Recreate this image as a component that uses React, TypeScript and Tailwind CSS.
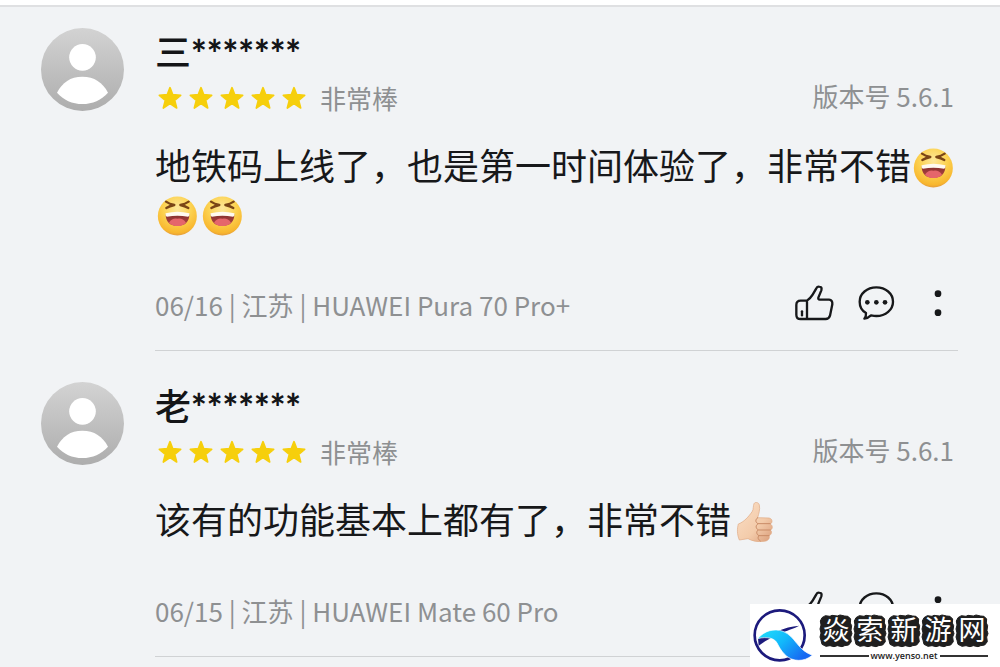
type Review = {
  name: string;
  rating: string;
  version: string;
  text: string;
  emoji: Array<'laugh' | 'thumb'>;
  date: string;
  region: string;
  device: string;
};

const reviews: Review[] = [
  {
    name: '三',
    rating: '非常棒',
    version: '5.6.1',
    text: '地铁码上线了，也是第一时间体验了，非常不错',
    emoji: ['laugh', 'laugh', 'laugh'],
    date: '06/16',
    region: '江苏',
    device: 'HUAWEI Pura 70 Pro+',
  },
  {
    name: '老',
    rating: '非常棒',
    version: '5.6.1',
    text: '该有的功能基本上都有了，非常不错',
    emoji: ['thumb'],
    date: '06/15',
    region: '江苏',
    device: 'HUAWEI Mate 60 Pro',
  },
];

function Avatar() {
  return (
    <svg className="size-[83px] shrink-0" viewBox="0 0 249 249" aria-hidden="true">
      <defs>
        <linearGradient id="avatar" x1="0" y1="0" x2="0" y2="1">
          <stop offset="0" stopColor="#d3d3d3" />
          <stop offset="1" stopColor="#adadad" />
        </linearGradient>
      </defs>
      <circle cx="124.500" cy="124.500" r="124.500" fill="url(#avatar)" />
      <circle cx="124.500" cy="88" r="40" fill="#fff" />
      <path d="M48 194 C64 163 88 146 124 146 S185 163 201 194 C182 216 154 228 124 228 S67 216 48 194Z" fill="#fff" />
    </svg>
  );
}

function Star() {
  return (
    <svg className="size-6" viewBox="0 0 72 72" aria-hidden="true">
      <path
        d="M36 5 L44 26 L68 28 L50 43 L56 66 L36 53 L16 66 L22 43 L4 28 L28 26Z"
        fill="#f6cf0c"
        stroke="#f6cf0c"
        strokeWidth="5"
        strokeLinejoin="round"
      />
    </svg>
  );
}

function Laugh() {
  return (
    <svg className="inline-block h-10 w-[45px] align-[-8px]" viewBox="0 0 135 120" role="img" aria-label="大笑">
      <defs>
        <radialGradient id="face" cx="0.5" cy="0.3" r="0.72">
          <stop offset="0" stopColor="#fde79a" />
          <stop offset="0.5" stopColor="#fcd250" />
          <stop offset="0.88" stopColor="#f8b62e" />
          <stop offset="1" stopColor="#dd9440" />
        </radialGradient>
        <linearGradient id="mouth" x1="0" y1="0" x2="0" y2="1">
          <stop offset="0" stopColor="#7c2b2a" />
          <stop offset="1" stopColor="#b94846" />
        </linearGradient>
      </defs>
      <circle cx="67" cy="60" r="58.500" fill="url(#face)" />
      <g fill="none" stroke="#7a4516" strokeWidth="7" strokeLinecap="round" strokeLinejoin="round">
        <path d="M33 17 Q43 24 58 27 Q44 30 34 36" />
        <path d="M101 17 Q91 24 76 27 Q90 30 100 36" />
      </g>
      <path d="M32 54 Q67 46 103 54 Q103 89 67 90 Q32 89 32 54Z" fill="url(#mouth)" />
      <path d="M42 80 Q52 65 67 68 Q83 65 93 80 Q83 90 67 90 Q52 90 42 80Z" fill="#e5666b" />
      <path d="M32 52 Q67 43 103 52 Q105 61 99 62 Q67 56 36 62 Q30 61 32 52Z" fill="#fffaf0" />
    </svg>
  );
}

function ThumbEmoji() {
  return (
    <svg className="inline-block h-10 w-[45px] align-[-8px]" viewBox="-5 0 135 120" role="img" aria-label="点赞">
      <defs>
        <linearGradient id="skin" x1="0" y1="0" x2="1" y2="1">
          <stop offset="0" stopColor="#fbdfc6" />
          <stop offset="0.6" stopColor="#f3cbaa" />
          <stop offset="1" stopColor="#d99c79" />
        </linearGradient>
      </defs>
      <path
        d="M17 66 C34 60 48 44 59 28 C63 21 61 12 64 5 C67 -1 78 0 80 9 C83 23 78 36 75 47 L109 48 C121 50 120 64 112 66 C122 70 120 82 113 84 C120 89 116 99 109 101 C113 109 106 117 94 118 C75 121 59 117 46 110 L20 114 C13 98 13 80 17 66Z"
        fill="url(#skin)"
        stroke="#dfa983"
        strokeWidth="2"
      />
      <path d="M75 47 C67 53 68 61 76 65 H112 M75 66 C68 71 69 79 77 84 H113 M76 84 C70 89 71 97 79 101 H109 M79 101 C73 107 77 113 83 117" fill="none" stroke="#c98b66" strokeWidth="3" strokeLinecap="round" />
    </svg>
  );
}

function LikeIcon() {
  return (
    <svg className="size-10" viewBox="0 0 120 120" fill="none" stroke="#17181a" strokeWidth="7" strokeLinecap="round" strokeLinejoin="round" aria-hidden="true">
      <path d="M39 47 H20 Q7 47 7 60 V89 Q7 102 20 102 H95 Q105 102 108 92 L115 58 Q116 45 105 44 H77 Q72 44 73 38 L82 16 Q85 5 76 5 Q70 4 67 10 L56 29 Q50 39 39 47 V102" />
      <path d="M24 79 V91" />
    </svg>
  );
}

function CommentIcon() {
  return (
    <svg className="size-10" viewBox="0 0 120 120" aria-hidden="true">
      <path
        d="M30 84 C18 77 11 64 11 50 C11 26 33 7 61 7 S111 26 111 50 S89 93 61 93 C55 93 50 92 45 91 Q35 100 25 101 Q31 94 30 84Z"
        fill="none"
        stroke="#17181a"
        strokeWidth="7"
        strokeLinejoin="round"
      />
      <g fill="#17181a">
        <circle cx="34" cy="52" r="7" />
        <circle cx="61" cy="52" r="7" />
        <circle cx="87" cy="52" r="7" />
      </g>
    </svg>
  );
}

function MoreIcon() {
  return (
    <svg className="size-10" viewBox="0 0 120 120" fill="#17181a" aria-hidden="true">
      <circle cx="60" cy="26" r="10" />
      <circle cx="60" cy="83" r="10" />
    </svg>
  );
}

function ReviewItem({ review }: { review: Review }) {
  return (
    <article className="flex gap-[31px] pt-[31px] pr-[42px] pl-[41px] first:pt-[21px]">
      <Avatar />
      <div className="min-w-0 flex-1 border-b border-[#d0d2d4] pb-[25px]">
        <h2 className="flex h-11 items-center text-[36px] leading-[44px] font-medium text-[#141517]">
          {review.name}
          <span className="pt-2 font-['Lato','Noto_Sans_CJK_SC',sans-serif] text-[37px] font-black">*******</span>
        </h2>
        <div className="mt-3 flex h-7 items-start justify-between text-[26px] text-[#8e9092]">
          <div className="flex items-center gap-[14px] pl-[3px] leading-7">
            <div className="flex gap-[7px]" role="img" aria-label="5 星">
              {[1, 2, 3, 4, 5].map((n) => (
                <Star key={n} />
              ))}
            </div>
            <span>{review.rating}</span>
          </div>
          <span className="pr-1 leading-6">版本号 {review.version}</span>
        </div>
        <p className="mt-7 text-[36px] leading-[48px] text-[#17181a]">
          {review.text}
          {review.emoji.map((kind, i) => (kind === 'laugh' ? <Laugh key={i} /> : <ThumbEmoji key={i} />))}
        </p>
        <footer className="mt-[49px] flex h-10 items-center justify-between">
          <span className="text-[26px] leading-10 text-[#8e9092]">
            {review.date} | {review.region} | {review.device}
          </span>
          <div className="flex gap-[22px]">
            <button type="button" aria-label="赞">
              <LikeIcon />
            </button>
            <button type="button" aria-label="评论">
              <CommentIcon />
            </button>
            <button type="button" aria-label="更多">
              <MoreIcon />
            </button>
          </div>
        </footer>
      </div>
    </article>
  );
}

function Stamp({ glyph }: { glyph: string }) {
  return (
    <span className="relative flex size-8 items-center justify-center">
      <svg className="absolute inset-0 size-8 overflow-visible" viewBox="0 0 96 96" aria-hidden="true">
        <path
          d="M16 2 L30 4 L36 1 L52 3 L60 0 L74 3 L84 4 L92 12 L91 24 L95 32 L93 46 L96 56 L92 66 L94 80 L86 90 L74 92 L66 95 L52 92 L42 95 L30 92 L18 94 L6 88 L3 76 L0 66 L3 54 L0 42 L3 30 L1 18 L6 8Z"
          fill="#1f1f1f"
          stroke="#1f1f1f"
          strokeWidth="3"
          strokeLinejoin="round"
        />
      </svg>
      <span className="relative pb-1">{glyph}</span>
    </span>
  );
}

function SiteBadge() {
  return (
    <a href="#yenso" className="fixed right-0 bottom-0 flex h-[63px] w-[250px] bg-white pl-[3px]">
      <svg className="h-[63px] w-[62px] shrink-0" viewBox="39 12 186 189" aria-hidden="true">
        <defs>
          <linearGradient id="wave" x1="0" y1="0" x2="1" y2="0.6">
            <stop offset="0" stopColor="#22e0fa" />
            <stop offset="0.5" stopColor="#12b9fb" />
            <stop offset="1" stopColor="#1769f2" />
          </linearGradient>
        </defs>
        <circle cx="119" cy="106" r="75" fill="none" stroke="#1c1a7c" strokeWidth="8" />
        <path d="M54 115 C95 103 130 80 178 77 C152 91 110 98 56 137Z" fill="#1c1a7c" />
        <path
          d="M53 116 C73 92 103 84 129 94 C168 110 170 149 217 166 C203 177 190 181 176 181 C146 181 128 160 116 138 C110 125 104 118 92 115 C80 112 68 112 53 116Z"
          fill="url(#wave)"
          stroke="#fff"
          strokeWidth="2"
        />
      </svg>
      <span className="ml-[5px] flex flex-col pt-[11px]">
        <span className="flex gap-[2px] text-[27px] leading-7 text-white">
          {['焱', '索', '新', '游', '网'].map((c) => (
            <Stamp key={c} glyph={c} />
          ))}
        </span>
        <span className="mt-1 flex items-center gap-[2px] font-['Open_Sans',sans-serif] text-[9px] leading-[10px] font-semibold text-[#222]">
          <span className="h-[2px] flex-1 bg-[#333]" />
          www.yenso.net
          <span className="h-[2px] flex-1 bg-[#333]" />
        </span>
      </span>
    </a>
  );
}

export default function App() {
  return (
    <div className="min-h-screen bg-[#f1f3f5] font-['Noto_Sans_CJK_SC',sans-serif]">
      <div className="h-[7px] border-b-2 border-[#dfe0e2] bg-white" />
      <main>
        {reviews.map((review) => (
          <ReviewItem key={review.date} review={review} />
        ))}
      </main>
      <SiteBadge />
    </div>
  );
}
